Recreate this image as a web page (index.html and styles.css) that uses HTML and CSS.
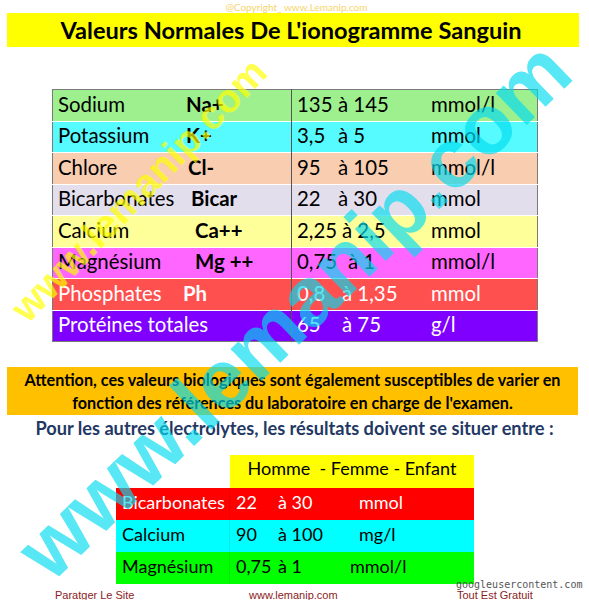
FILE: index.html
```html
<!DOCTYPE html>
<html>
<head>
    <title>Valeurs Normales De L'ionogramme Sanguin</title>
    <meta charset="UTF-8">
    <meta name="viewport" content="width=device-width, initial-scale=1.0">
    <link rel="stylesheet" href="styles.css">
</head>
<body>
    <div class="page">
        <p class="copy">@Copyright_ www.Lemanip.com</p>
        <h1 class="title">Valeurs Normales De L'ionogramme Sanguin</h1>

        <table class="iono">
            <tr class="na">
                <td><span class="name">Sodium</span><b>Na+</b></td>
                <td><span class="from">135</span>à 145<span class="unit">mmol/l</span></td>
            </tr>
            <tr class="k">
                <td><span class="name">Potassium</span><b>K+</b></td>
                <td><span class="from">3,5</span>à 5<span class="unit">mmol</span></td>
            </tr>
            <tr class="cl">
                <td><span class="name">Chlore</span><b class="r2">Cl-</b></td>
                <td><span class="from">95</span>à 105<span class="unit">mmol/l</span></td>
            </tr>
            <tr class="bicar">
                <td><span class="name">Bicarbonates</span><b class="r5">Bicar</b></td>
                <td><span class="from">22</span>à 30<span class="unit">mmol</span></td>
            </tr>
            <tr class="ca">
                <td><span class="name">Calcium</span><b class="r9">Ca++</b></td>
                <td><span class="from wide">2,25</span>à 2,5<span class="unit">mmol</span></td>
            </tr>
            <tr class="mg">
                <td><span class="name">Magnésium</span><b class="r9">Mg ++</b></td>
                <td><span class="from wider">0,75</span>à 1<span class="unit">mmol/l</span></td>
            </tr>
            <tr class="ph">
                <td><span class="name">Phosphates</span><b class="l3">Ph</b></td>
                <td><span class="from wide">0,8</span>à 1,35<span class="unit">mmol</span></td>
            </tr>
            <tr class="prot">
                <td>Protéines totales</td>
                <td><span class="from wide">65</span>à 75<span class="unit">g/l</span></td>
            </tr>
        </table>

        <div class="note">
            Attention, ces valeurs biologiques sont également susceptibles de varier en<br>
            fonction des références du laboratoire en charge de l'examen.
        </div>
        <p class="other">Pour les autres électrolytes, les résultats doivent se situer entre :</p>

        <table class="extra">
            <tr class="head">
                <td></td>
                <td>Homme  - Femme - Enfant</td>
            </tr>
            <tr class="red">
                <td>Bicarbonates</td>
                <td><span class="from">22</span><span class="range">à 30</span>mmol</td>
            </tr>
            <tr class="cyan">
                <td>Calcium</td>
                <td><span class="from">90</span><span class="range">à 100</span>mg/l</td>
            </tr>
            <tr class="green">
                <td>Magnésium</td>
                <td><span class="from">0,75</span><span class="range short">à 1</span>mmol/l</td>
            </tr>
        </table>

        <div class="foot">
            <span class="share">Paratger Le Site</span>
            <span class="site">www.lemanip.com</span>
            <span>Tout Est Gratuit</span>
        </div>
    </div>

    <div class="mark mark-cyan">www.lemanip.com</div>
    <div class="mark mark-yellow">www.lemanip.com</div>
    <div class="gsrc">googleusercontent.com</div>
</body>
</html>
```

FILE: styles.css
```css
body {
    margin: 0;
    background: #fff;
    font-family: Lato, 'Open Sans', sans-serif;
    color: #000;
    width: 589px;
    height: 600px;
    overflow: hidden;
    position: relative;
}
.page {
    padding-top: 1px;
}
.copy {
    margin: 0;
    text-align: center;
    font-size: 10px;
    line-height: 12px;
    color: #f7d56a;
    padding-left: 4px;
}
.title {
    margin: 0 10px 0 7px;
    background: #ffff00;
    font-size: 23.6px;
    line-height: 34px;
    font-weight: 700;
    text-align: center;
    padding-right: 4px;
}

/* tableau principal */
.iono {
    margin: 42px 0 0 52px;
    border-collapse: collapse;
    border: 1px solid #7a7a7a;
    font-size: 20.4px;
}
.iono tr {
    height: 31.5px;
    border-top: 1px solid #fff;
}
.iono tr:first-child {
    border-top: none;
}
.iono td {
    padding: 0 0 3px 5px;
    white-space: nowrap;
    line-height: 24px;
}
.iono td:first-child {
    width: 233px;
}
.iono td + td {
    width: 240px;
    border-left: 1px solid #555;
    position: relative;
}
.iono .name {
    display: inline-block;
    width: 128px;
}
.iono b.r2 { margin-left: 2px; }
.iono b.r5 { margin-left: 5px; }
.iono b.r9 { margin-left: 9px; }
.iono b.l3 { margin-left: -3px; }
.iono .from {
    display: inline-block;
    width: 41px;
}
.iono .from.wide { width: 45px; }
.iono .from.wider { width: 51px; }
.iono .unit {
    position: absolute;
    left: 139px;
}
.na { background: #9ef08f; }
.k { background: #55fbff; }
.cl { background: #f8cdb0; }
.bicar { background: #e3deec; }
.ca { background: #ffff99; }
.mg { background: #ff66ff; }
.ph { background: #ff5050; color: #fff; }
.prot { background: #8000ff; color: #fff; }

.note {
    margin: 25px 11px 0 7px;
    background: #ffc000;
    text-align: center;
    font-weight: 700;
    font-size: 16.2px;
    line-height: 23px;
    padding: 1px 0 1px;
}
.other {
    margin: 2px 0 0;
    text-align: center;
    font-weight: 700;
    font-size: 18.2px;
    line-height: 22px;
    color: #1f3864;
    padding-left: 0;
}

/* autres électrolytes */
.extra {
    margin: 16px 0 0 116px;
    border-collapse: collapse;
    font-size: 18px;
}
.extra td {
    padding: 0 0 4px 6px;
    white-space: nowrap;
}
.extra td:first-child {
    width: 107px;
}
.extra td + td {
    width: 238px;
    border-left: 1px solid rgba(0, 0, 0, 0.08);
}
.extra .head {
    height: 33px;
}
.extra .head td {
    padding-bottom: 8px;
}
.extra .head td:first-child {
    background: #fff;
}
.extra .head td + td {
    background: #ffff00;
    padding-left: 18px;
    white-space: pre;
    width: 226px;
    border-left: none;
}
.extra tr.red, .extra tr.cyan, .extra tr.green {
    height: 32px;
}
.extra .from {
    display: inline-block;
    width: 42px;
}
.extra .range {
    display: inline-block;
    width: 81px;
}
.extra .range.short { width: 72px; }
.red { background: #ff0000; color: #fff; }
.cyan { background: #00ffff; }
.green { background: #00ff00; }

.foot {
    margin-top: 5px;
    padding-left: 55px;
    display: flex;
    font-family: 'Liberation Sans', Arial, sans-serif;
    font-size: 11px;
    line-height: 13px;
    color: #8b1c1c;
}
.foot .share { width: 194px; }
.foot .site { width: 208px; }

/* filigranes */
.mark {
    position: absolute;
    font-family: 'Liberation Sans', Arial, sans-serif;
    white-space: nowrap;
    pointer-events: none;
    transform: translate(-50%, -50%) rotate(-44deg);
}
.mark-cyan {
    left: 294px;
    top: 310px;
    font-size: 84px;
    font-weight: 700;
    color: rgba(0, 218, 240, 0.66);
}
.mark-yellow {
    left: 139px;
    top: 190px;
    font-size: 40px;
    font-weight: 700;
    color: rgba(255, 255, 0, 0.7);
    transform: translate(-50%, -50%) rotate(-46deg);
}
.gsrc {
    position: absolute;
    left: 456px;
    top: 579px;
    font-family: 'DejaVu Sans Mono', monospace;
    font-size: 10px;
    color: #555;
}
```
